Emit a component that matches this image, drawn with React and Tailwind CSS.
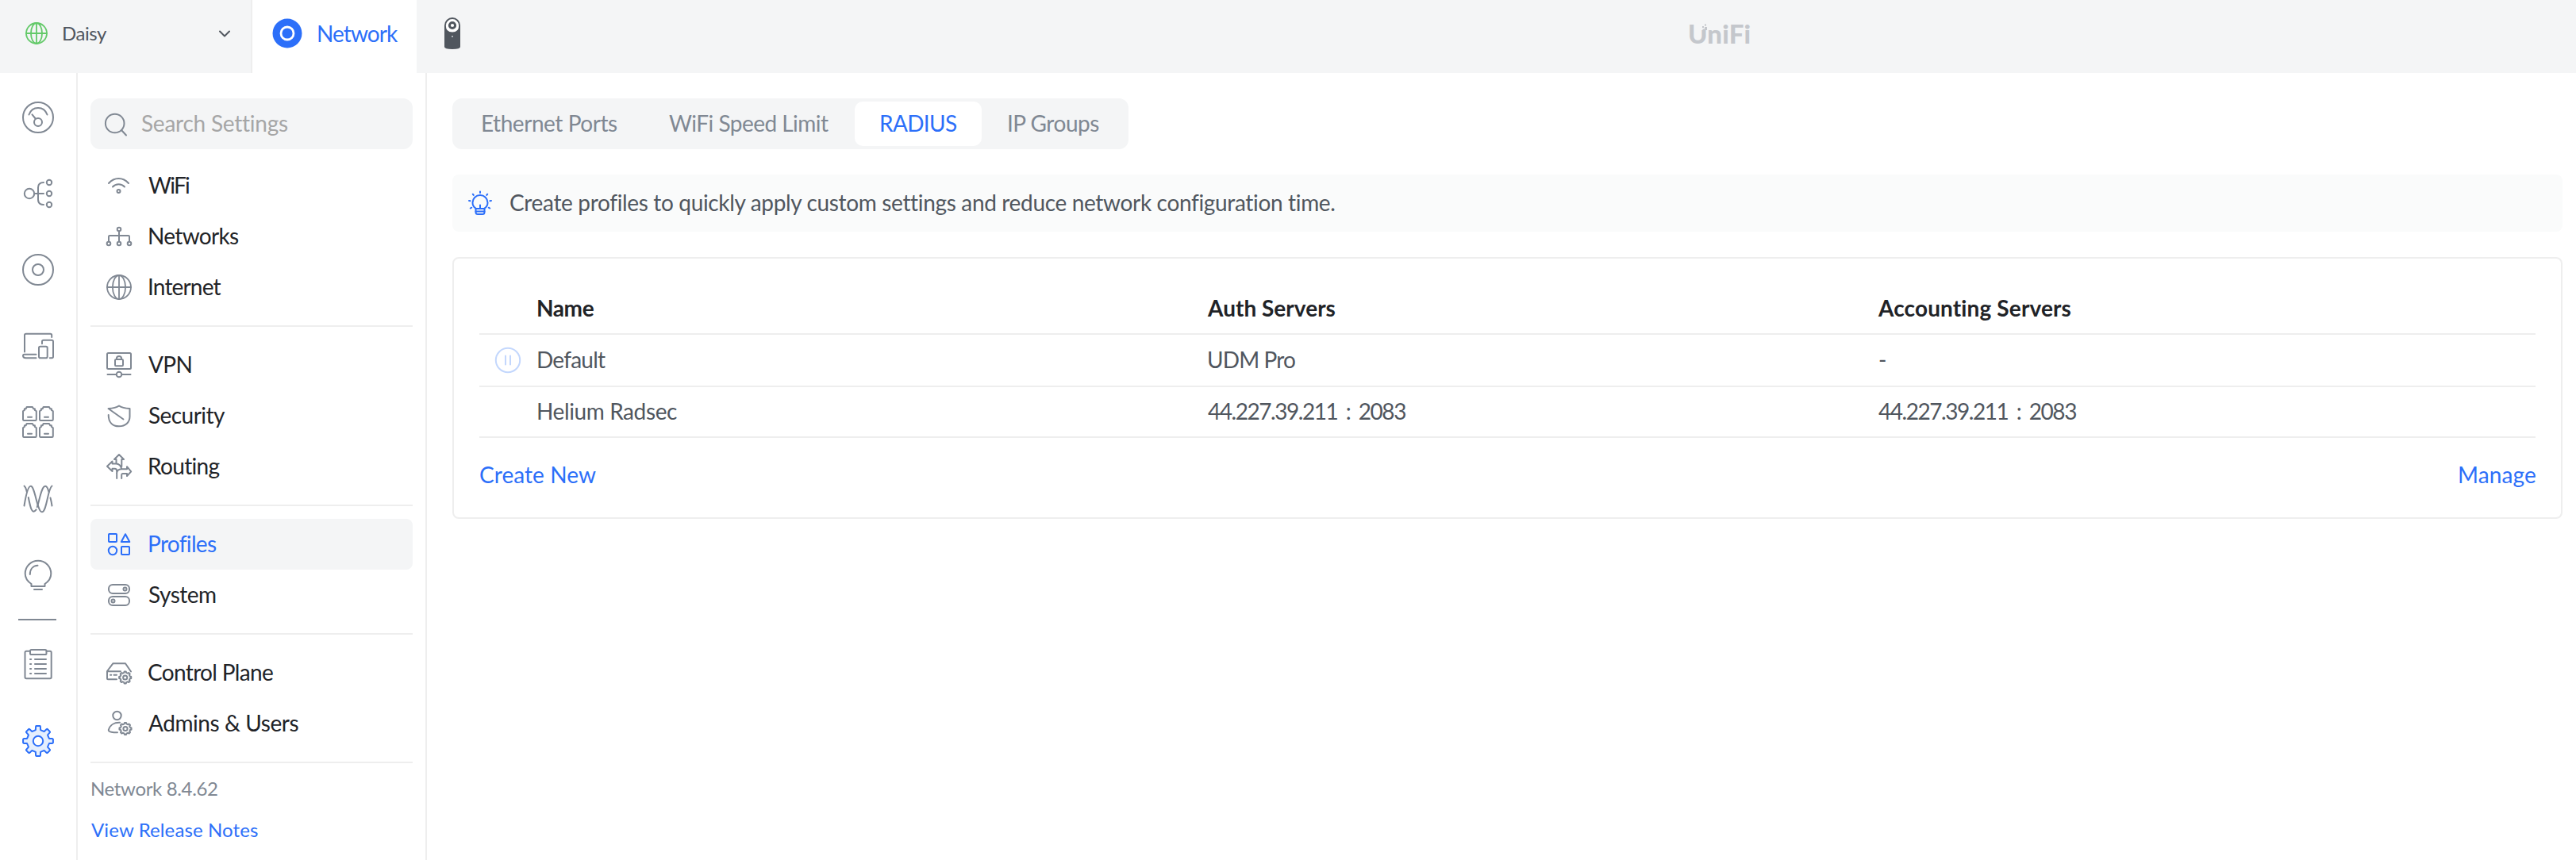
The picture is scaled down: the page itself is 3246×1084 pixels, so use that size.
import React from "react";

function Icon({ size, className = "", sw = 2, children }) {
  return (
    <svg
      width={size}
      height={size}
      viewBox={`0 0 ${size} ${size}`}
      fill="none"
      stroke="currentColor"
      strokeWidth={sw}
      strokeLinecap="round"
      strokeLinejoin="round"
      className={"shrink-0 overflow-visible " + className}
    >
      {children}
    </svg>
  );
}

/* Closed outline of a cog: flat teeth joined by short flanks. */
function gearPath(cx, cy, outer, inner, teeth) {
  const step = (Math.PI * 2) / teeth;
  const at = (r, a) => `${(cx + r * Math.cos(a)).toFixed(2)} ${(cy + r * Math.sin(a)).toFixed(2)}`;
  let d = "";
  for (let i = 0; i < teeth; i++) {
    const a = i * step - Math.PI / 2;
    d += `${i ? "L" : "M"}${at(inner, a - step * 0.28)}`;
    d += `L${at(outer * 0.97, a - step * 0.2)}Q${at(outer * 1.01, a - step * 0.18)} ${at(outer, a - step * 0.13)}`;
    d += `L${at(outer, a + step * 0.13)}Q${at(outer * 1.01, a + step * 0.18)} ${at(outer * 0.97, a + step * 0.2)}`;
    d += `L${at(inner, a + step * 0.28)}`;
    d += `Q${at(inner * 0.97, a + step * 0.5)} ${at(inner, a + step * 0.72)}`;
  }
  return d + "Z";
}

function Globe({ size, className }) {
  const c = size / 2;
  const r = c - 1;
  return (
    <Icon size={size} className={className} sw={1.8}>
      <circle cx={c} cy={c} r={r} />
      <ellipse cx={c} cy={c} rx={r * 0.54} ry={r} />
      <path d={`M${c} 1V${size - 1}M1 ${c}H${size - 1}`} />
    </Icon>
  );
}

const port = "M2 18H16.6A1.2 1.2 0 0 0 17.8 16.8V6.3L15.9 4.9V3.3H14.2L12.9 1H5.7L4.6 3.3H2.9V4.9L1 6.3V16.800A1.2 1.2 0 0 0 2 18ZM7 13.700H12";

const RailIcons = {
  gauge: (
    <>
      <circle cx="20" cy="20" r="19" />
      <path d="M8.5 16.5C10.5 11 15 8 20 8s9.500 3 11.500 8.500" />
      <path d="M12.500 16.300 16.700 21.500" />
      <circle cx="20" cy="26" r="5" />
    </>
  ),
  topology: (
    <>
      <circle cx="9" cy="20" r="6.200" />
      <path d="M15.500 20H27M27 6c-4.500 0-7 2.200-7 6.500V27.500c0 4.300 2.500 6.500 7 6.500" />
      <circle cx="34" cy="6" r="3.200" />
      <circle cx="34" cy="20" r="3.200" />
      <circle cx="34" cy="34" r="3.200" />
    </>
  ),
  target: (
    <>
      <circle cx="20" cy="20" r="19" />
      <circle cx="20" cy="20" r="7" />
    </>
  ),
  devices: (
    <>
      <path d="M3 27.500V6.500A1.800 1.800 0 0 1 4.800 4.700H35.400A1.800 1.800 0 0 1 37.200 6.500V9" />
      <path d="M17.500 30.800H2.800A1.500 1.500 0 0 0 1 32.300Q1 35.200 4.500 35.200H17.500" />
      <rect x="21" y="20.800" width="10.700" height="14.400" rx="1.800" />
      <path d="M25 17.200V14.500A1.700 1.700 0 0 1 26.700 12.800H37.300A1.700 1.700 0 0 1 39 14.500V33.500A1.700 1.700 0 0 1 37.300 35.200H34.800" />
    </>
  ),
  ports: (
    <>
      <path d={port} />
      <path d={port} transform="translate(21 0)" />
      <path d={port} transform="translate(0 21)" />
      <path d={port} transform="translate(21 21)" />
    </>
  ),
  waves: (
    <>
      <path d="M37.500 29.500C37 26 36.300 22.500 35.500 19.500M33.500 12C32.300 7.500 31 4.800 29.200 4.800C24 4.800 21.500 24 18.800 31M17.600 34.300C12.500 41 10.500 33 7.800 19M5.800 12C5 8.500 3.800 5.500 2.500 4.500" />
      <path d="M2.500 29.500C5 14 8 4.800 10.800 4.800C16 4.800 19 37.300 24.800 37.300C31 37.300 32 8 37.500 4.500" />
    </>
  ),
  bulb: (
    <>
      <path d="M11.500 35V32C7 29 3.700 24.500 3.700 19A16.300 16.300 0 0 1 36.300 19C36.300 24.500 33 29 28.500 32V35Z" />
      <path d="M9.800 20C9.800 13.500 13.500 9.200 19.500 8.800M15 39H25" />
    </>
  ),
  clipboard: (
    <>
      <path d="M9.500 2.800H5.200A1.700 1.700 0 0 0 3.500 4.500V35.500A1.700 1.700 0 0 0 5.200 37.200H35A1.700 1.700 0 0 0 36.700 35.500V4.500A1.700 1.700 0 0 0 35 2.800H30.700" />
      <rect x="10" y="1" width="20.500" height="6" rx="1.600" />
      <path d="M10 13H11.200M10 19H11.200M10 25H11.200M10 31H11.200M16 13H30M16 19H30M16 25H30M16 31H30" />
    </>
  ),
};

const NavIcons = {
  wifi: (
    <>
      <path d="M3 13C6.500 9 10.500 7 15.500 7S24.500 9 28 13M8 17.500C10 15.300 12.500 14.300 15.500 14.300S21 15.300 23 17.500" />
      <circle cx="15.500" cy="23" r="2" />
    </>
  ),
  networks: (
    <>
      <circle cx="16" cy="7" r="2.300" />
      <path d="M16 9.500V22.500M3 22.500V16.200A1.200 1.200 0 0 1 4.200 15H27.800A1.200 1.200 0 0 1 29 16.200V22.500" />
      <circle cx="3" cy="25" r="2.300" />
      <circle cx="16" cy="25" r="2.300" />
      <circle cx="29" cy="25" r="2.300" />
    </>
  ),
  vpn: (
    <>
      <rect x="1" y="1" width="30" height="20" rx="1.500" />
      <rect x="11" y="9" width="10" height="8.300" rx="1.200" />
      <path d="M13 9V7.500C13 4 19 4 19 7.500V9M1.500 28H12.500M19.500 28H30.500" />
      <circle cx="16" cy="28" r="3.300" />
    </>
  ),
  security: <path d="M21.500 20.500 2.500 7C8.500 6.800 12.500 6 16 3.500C19.500 6 23.500 6.800 29.500 7V17C29.500 24.500 24 29.300 16 29.300C8 29.300 2.700 24.500 2.700 15" />,
  routing: (
    <path
      d="M12.500 12.500V7H10L16 1 22 7H19.300V16M12.500 12.500H7.500V9.500L1 15.700 7.500 22V18.800H10.500C12.500 18.800 13.200 20 13.200 22V31M12.500 12.500C16 12.500 18 14 19.300 19.300H26V16.200L31.200 22.300 26 28V25H20.500C19.500 25 19.200 25.500 19.200 26.500V31M13 24.500C13.500 21 15.500 19.300 19.300 19.300"
    />
  ),
  profiles: (
    <>
      <rect x="3" y="3" width="10" height="10" rx="0.800" />
      <path d="M24 3.200 29.300 13H18.800Z" />
      <circle cx="8" cy="24" r="5.200" />
      <rect x="19" y="19" width="10" height="10" rx="0.800" />
    </>
  ),
  system: (
    <>
      <rect x="3" y="3" width="26" height="11" rx="5" />
      <rect x="3" y="18" width="26" height="11" rx="5" />
      <circle cx="23.500" cy="8.500" r="2" />
      <circle cx="8.500" cy="23.500" r="2" />
    </>
  ),
  control: (
    <>
      <path d="M31 14.500 24 4.200H8.500L1 14V23.300A1 1 0 0 0 2 24.300H13M1 14.200H18M5 18.700H6.200M9.500 18.700H13" />
      <path d={gearPath(23.7, 22, 7.6, 6.2, 8)} />
      <circle cx="23.700" cy="22" r="2.600" />
    </>
  ),
  admins: (
    <>
      <circle cx="13.500" cy="6" r="5.200" />
      <path d="M17 14.800C10 14.500 4.500 18 2.800 24C2.300 27 9 27.300 14 27.300" />
      <path d={gearPath(24, 22.5, 7.6, 6.2, 8)} />
      <circle cx="24" cy="22.500" r="2.600" />
    </>
  ),
};

const railItems = ["gauge", "topology", "target", "devices", "ports", "waves", "bulb"];

function Rail() {
  return (
    <nav className="flex w-[98px] shrink-0 flex-col border-r-2 border-[#eeeeee] pt-2 text-[#808893]">
      {railItems.map((name) => (
        <div key={name} className="flex h-24 items-center pl-7">
          <Icon size={40}>{RailIcons[name]}</Icon>
        </div>
      ))}
      <div className="my-2 ml-[23px] h-0.5 w-12 bg-[#808893]" />
      <div className="flex h-24 items-center pl-7">
        <Icon size={40}>{RailIcons.clipboard}</Icon>
      </div>
      <div className="flex h-24 items-center pl-7 text-[#2c6ff9]">
        <Icon size={40}>
          <path d={gearPath(20, 20, 19, 14.3, 8)} fill="#e5effd" />
          <circle cx="20" cy="20" r="6.200" fill="#ffffff" />
        </Icon>
      </div>
    </nav>
  );
}

const groups = [
  [
    { icon: "wifi", label: "WiFi", ls: "tracking-[-1.7px]" },
    { icon: "networks", label: "Networks", ls: "tracking-[-0.68px] -ml-px" },
    { icon: "globe", label: "Internet", ls: "tracking-[-0.83px] -ml-px" },
  ],
  [
    { icon: "vpn", label: "VPN", ls: "tracking-[-0.63px]" },
    { icon: "security", label: "Security", ls: "tracking-[-0.55px]" },
    { icon: "routing", label: "Routing", ls: "tracking-[-0.66px] -ml-px" },
  ],
  [
    { icon: "profiles", label: "Profiles", ls: "tracking-[-0.67px] -ml-px", active: true },
    { icon: "system", label: "System", ls: "tracking-[-0.5px]" },
  ],
  [
    { icon: "control", label: "Control Plane", ls: "tracking-[-0.66px] -ml-px" },
    { icon: "admins", label: "Admins & Users", ls: "tracking-[-0.43px]" },
  ],
];

function Sidebar() {
  return (
    <aside className="flex w-[440px] shrink-0 flex-col border-r-2 border-[#eeeeee] px-4 pt-8">
      <div className="flex h-16 items-center rounded-xl bg-[#f4f5f6] pl-[18px]">
        <Icon size={28} className="text-[#808893]">
          <circle cx="12.700" cy="13.500" r="11.800" />
          <path d="m21 22 6 6.500" />
        </Icon>
        <span className="pb-0.5 pl-[18px] tracking-[-0.24px] text-[#a6a6a6]">Search Settings</span>
      </div>
      <div className="pt-3.5">
        {groups.map((g, i) => (
          <div key={i}>
            {g.map((it) => (
              <div
                key={it.label}
                className={
                  "flex h-16 items-center gap-[21px] rounded-lg pl-5 " +
                  (it.active ? "bg-[#f4f5f6] text-[#2c6ff9]" : "text-[#212327]")
                }
              >
                {it.icon === "globe" ? (
                  <Globe size={32} className="text-[#808893]" />
                ) : (
                  <Icon size={32} className={it.active ? "" : "text-[#808893]"}>
                    {NavIcons[it.icon]}
                  </Icon>
                )}
                <span className={"pb-0.5 " + it.ls}>{it.label}</span>
              </div>
            ))}
            <div className="my-4 h-0.5 bg-[#eeeeee]" />
          </div>
        ))}
      </div>
      <div className="flex flex-col text-2xl leading-8">
        <span className="tracking-[-0.35px] text-[#808893]">Network 8.4.62</span>
        <span className="mt-5 pl-px tracking-[0.12px] text-[#2c6ff9]">View Release Notes</span>
      </div>
    </aside>
  );
}

function Header() {
  return (
    <header className="flex h-[92px] bg-[#f4f5f6]">
      <div className="flex w-[318px] items-center border-r-2 border-[#eeeeee] pb-2 pl-8 pr-[26px]">
        <Globe size={28} className="text-[#63c969]" />
        <span className="flex-1 pl-[18px] text-2xl tracking-[-0.45px] text-[#50565e]">Daisy</span>
        <Icon size={14} className="text-[#50565e]">
          <path d="m1 4.500 6 6 6-6" />
        </Icon>
      </div>
      <div className="flex w-[207px] items-center bg-white pb-2 pl-[25px] text-[#2c6ff9]">
        <Icon size={38}>
          <circle cx="19" cy="19" r="18.500" fill="#2c6ff9" stroke="none" />
          <circle cx="19" cy="19" r="8" stroke="#ffffff" strokeWidth="2.800" />
        </Icon>
        <span className="pl-[18px] tracking-[-0.92px]">Network</span>
      </div>
      <div className="flex items-center pb-2 pl-[35px]">
        <svg width="20" height="40" viewBox="0 0 20 40">
          <path d="M0 10A10 10 0 0 1 20 10V37Q20 40 10 40T0 37Z" fill="#50565e" />
          <path d="M10 2A8.200 8.200 0 0 1 18.200 10.200Q18.200 18.500 10 18.500T1.800 10.200A8.200 8.200 0 0 1 10 2Z" fill="#ffffff" />
          <circle cx="10" cy="10" r="3.600" fill="#ffffff" stroke="#50565e" strokeWidth="3" />
          <circle cx="10" cy="24" r="1.100" fill="#c3c6ca" />
        </svg>
      </div>
      <div className="ml-[1547px] flex items-center pb-2">
        <div className="relative text-[33px] font-black leading-10 tracking-[0.2px] text-[#c4c7cc]">
          UniFi
          <svg className="absolute left-4 top-2" width="9" height="8" viewBox="0 0 9 8">
            <path d="M0 0H9V8H0Z" fill="#f4f5f6" />
            <path d="M5 0.500H7V2.500H5ZM2 3H4V5H2ZM5 4H8V8H2.500V6.500H5Z" fill="#c4c7cc" />
          </svg>
        </div>
      </div>
    </header>
  );
}

const columns = "grid grid-cols-[846px_846px_1fr] items-center border-b-2 border-[#eeeeee] pl-[71px] pb-0.5 ";

function ProfilesCard() {
  return (
    <section className="mt-8 h-[330px] rounded-lg border-2 border-[#eeeeee] px-8 pt-8">
      <div className={columns + "h-16 font-bold text-[#212327]"}>
        <span className="pl-px tracking-[-0.4px]">Name</span>
        <span className="pl-px tracking-[0.02px]">Auth Servers</span>
        <span className="tracking-[0.13px]">Accounting Servers</span>
      </div>
      <div className={columns + "h-[66px] text-[#50565e]"}>
        <span className="relative pl-px tracking-[-0.77px]">
          Default
          <Icon size={34} className="absolute -left-[52px] top-1 text-[#c3d7fd]">
            <circle cx="17" cy="17" r="15.200" />
            <path d="M14 11.500V22.500M20 11.500V22.500" />
          </Icon>
        </span>
        <span className="tracking-[-0.87px]">UDM Pro</span>
        <span>-</span>
      </div>
      <div className={columns + "h-16 text-[#50565e]"}>
        <span className="pl-px tracking-[-0.39px]">Helium Radsec</span>
        <span className="pl-px tracking-[-1.45px] [word-spacing:4.7px]">44.227.39.211 : 2083</span>
        <span className="tracking-[-1.45px] [word-spacing:4.7px]">44.227.39.211 : 2083</span>
      </div>
      <div className="flex h-[92px] items-center justify-between text-[#2c6ff9]">
        <span className="tracking-[0.08px]">Create New</span>
        <span className="-mr-px tracking-[0.13px]">Manage</span>
      </div>
    </section>
  );
}

export default function App() {
  return (
    <div className="flex h-[1084px] w-full flex-col overflow-hidden bg-white font-['Lato',sans-serif] text-[28px] leading-10 whitespace-nowrap">
      <Header />
      <div className="flex min-h-0 flex-1">
        <Rail />
        <Sidebar />
        <main className="flex min-w-0 flex-1 flex-col pl-8 pr-[17px] pt-8">
          <div className="flex h-16 w-[852px] items-center rounded-xl bg-[#f4f5f6] text-[#808893]">
            <span className="w-[238px] pb-0.5 pl-9 tracking-[-0.45px]">Ethernet Ports</span>
            <span className="w-[269px] pb-0.5 pl-[35px] tracking-[-0.53px]">WiFi Speed Limit</span>
            <span className="flex h-14 w-40 items-center rounded-[10px] bg-white pb-0.5 pl-[31px] tracking-[-0.65px] text-[#2c6ff9]">
              RADIUS
            </span>
            <span className="pb-0.5 pl-8 tracking-[-0.48px]">IP Groups</span>
          </div>
          <div className="mt-8 flex h-[72px] items-center rounded-lg bg-[#fafbfb] pl-[19px] text-[#50565e]">
            <Icon size={32} className="text-[#2c6ff9]">
              <path d="M10.500 22.500C7.500 20.800 6.500 18.500 6.500 15.500A9.500 9.500 0 0 1 25.500 15.500C25.500 18.500 24.500 20.800 21.500 22.500V27.500A2.500 2.500 0 0 1 19 30H13A2.500 2.500 0 0 1 10.500 27.500Z" />
              <path d="M10.500 23H21.500M10.500 26.500H21.500M16 18.500V23M16 1.500V3M6.800 4.700 7.700 5.900M25.200 4.700 24.300 5.900M2 13 3.600 13.300M30 13 28.400 13.300M3.800 22.500 5.200 21.700M28.200 22.500 26.800 21.700" />
            </Icon>
            <span className="pb-0.5 pl-[21px] tracking-[-0.34px]">
              Create profiles to quickly apply custom settings and reduce network configuration time.
            </span>
          </div>
          <ProfilesCard />
        </main>
      </div>
    </div>
  );
}
